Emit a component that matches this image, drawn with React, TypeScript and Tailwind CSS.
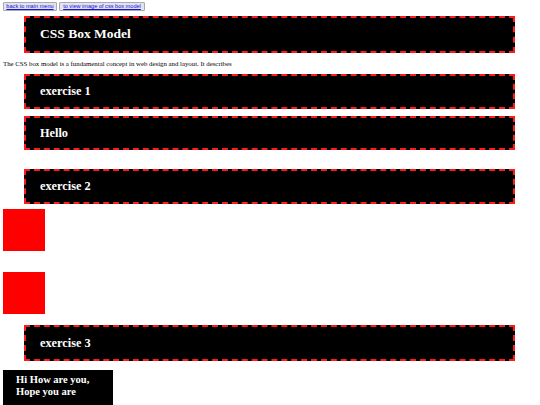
import React from "react";

function Heading({ children, className = "" }: { children: React.ReactNode; className?: string }) {
  return (
    <div
      className={`ml-[24px] mr-[25px] flex items-center border-2 border-dashed border-[#ff1a1a] bg-black pl-[14px] font-bold text-white ${className}`}
    >
      {children}
    </div>
  );
}

function LinkButton({ children, className = "" }: { children: React.ReactNode; className?: string }) {
  return (
    <button
      type="button"
      className={`flex h-[9px] items-center justify-center rounded-[1px] border border-[#a9a9b4] bg-[#e3e3ea] font-['Liberation_Sans',sans-serif] text-[5.6px] leading-none text-[#1010e0] underline ${className}`}
    >
      {children}
    </button>
  );
}

export default function App() {
  return (
    <div className="min-h-[405px] bg-white pb-10 font-['Liberation_Serif',serif] text-black">
      <div className="flex gap-[2px] pl-[3px] pt-[2px]">
        <LinkButton className="w-[54px]">back to main menu</LinkButton>
        <LinkButton className="w-[86px]">to view image of css box model</LinkButton>
      </div>

      <Heading className="mt-[5px] h-[37px] text-[13.5px]">CSS Box Model</Heading>

      <p className="mt-[7px] pl-[3px] text-[6.8px] leading-[8px]">
        The CSS box model is a fundamental concept in web design and layout. It describes
      </p>

      <Heading className="mt-[6px] h-[35px] text-[12.3px]">exercise 1</Heading>
      <Heading className="mt-[7px] h-[34px] text-[12.3px]">Hello</Heading>
      <Heading className="mt-[19px] h-[35px] text-[12.3px]">exercise 2</Heading>

      <div className="ml-[3px] mt-[5px] h-[42px] w-[42px] bg-[#ff0000]" />
      <div className="ml-[3px] mt-[21px] h-[42px] w-[42px] bg-[#ff0000]" />

      <Heading className="mt-[11px] h-[36px] text-[12.3px]">exercise 3</Heading>

      <div className="ml-[3px] mt-[9px] w-[110px] bg-black pb-4 pl-[13px] pt-[4px] text-[10.5px] font-bold leading-[12px] text-white">
        Hi How are you,
        <br />
        Hope you are
      </div>
    </div>
  );
}
